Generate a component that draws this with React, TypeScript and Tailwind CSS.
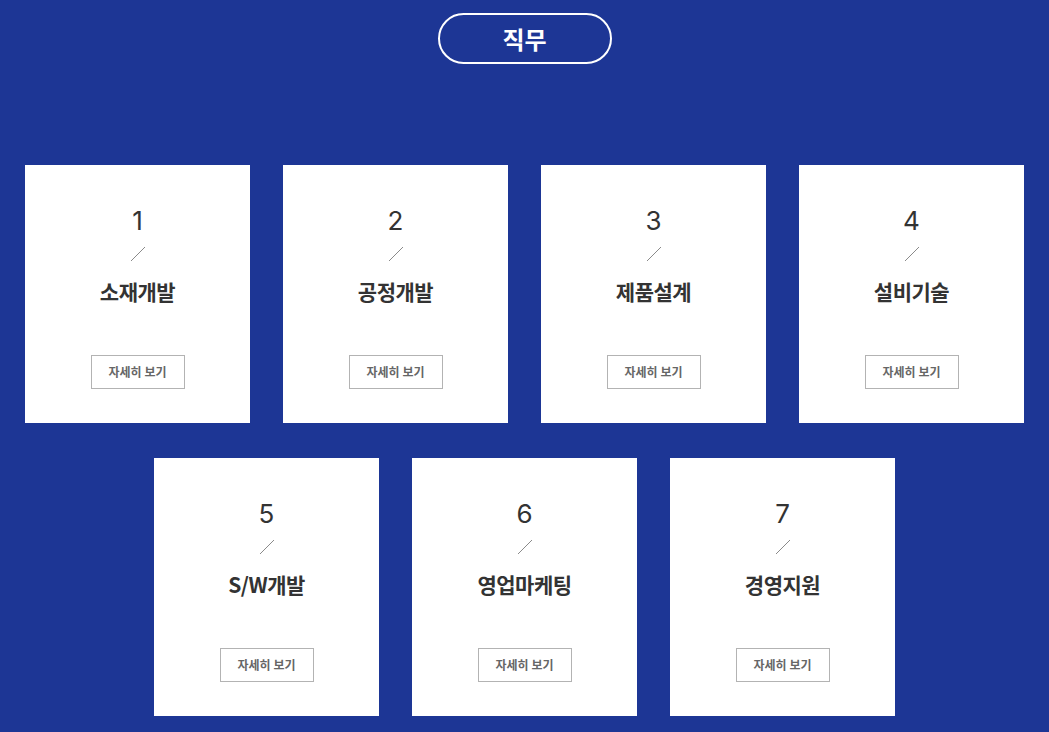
import React from 'react';

const jobs = [
  { no: 1, title: '소재개발' },
  { no: 2, title: '공정개발' },
  { no: 3, title: '제품설계' },
  { no: 4, title: '설비기술' },
  { no: 5, title: 'S/W개발' },
  { no: 6, title: '영업마케팅' },
  { no: 7, title: '경영지원' },
];

function JobCard({ no, title }: { no: number; title: string }) {
  return (
    <div className="w-[225px] h-[258px] bg-white flex flex-col items-center">
      <div className="mt-[40px] h-[32px] leading-[32px] text-[26px] font-normal text-[#333] font-['Inter','Noto_Sans',sans-serif]">
        {no}
      </div>
      {/* diagonal divider */}
      <svg className="mt-[9px]" width="16" height="16" viewBox="0 0 16 16">
        <line x1="1" y1="15" x2="15" y2="1" stroke="#8a8a8a" strokeWidth="1" />
      </svg>
      <div className="mt-[14px] h-[30px] leading-[30px] text-[21px] font-bold text-[#333] tracking-[-0.5px]">
        {title}
      </div>
      <button className="mt-[49px] w-[94px] h-[34px] border border-[#b3b3b3] text-[12px] font-bold text-[#666] bg-white">
        자세히 보기
      </button>
    </div>
  );
}

export default function App() {
  return (
    <div className="w-full min-h-[732px] bg-[#1d3695] font-['Noto_Sans_CJK_KR','Noto_Sans',sans-serif] flex flex-col items-center pt-[13px]">
      <div className="w-[174px] h-[51px] rounded-full border-2 border-white flex items-center justify-center text-white text-[24px] font-bold">
        직무
      </div>
      <div className="mt-[101px] flex flex-col items-center gap-[35px]">
        <div className="flex gap-[33px]">
          {jobs.slice(0, 4).map((j) => (
            <JobCard key={j.no} {...j} />
          ))}
        </div>
        <div className="flex gap-[33px]">
          {jobs.slice(4).map((j) => (
            <JobCard key={j.no} {...j} />
          ))}
        </div>
      </div>
    </div>
  );
}
